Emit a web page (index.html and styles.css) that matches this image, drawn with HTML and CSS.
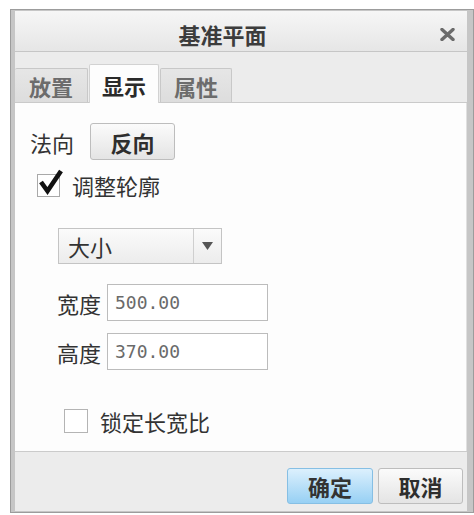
FILE: index.html
```html
<!DOCTYPE html>
<html lang="zh-CN">
<head>
  <meta charset="UTF-8">
  <title>基准平面</title>
  <link rel="stylesheet" href="styles.css">
</head>
<body>
  <div class="dialog">
    <div class="panel">
      <div class="titlebar">
        <span class="title">基准平面</span>
        <span class="close">
          <svg width="15" height="13" viewBox="0 0 15 13"><path d="M2 1.5 L13 11.5 M13 1.5 L2 11.5" stroke="#6b6b6b" stroke-width="3.4" stroke-linecap="round"/></svg>
        </span>
      </div>

      <div class="tabs">
        <div class="tab">放置</div>
        <div class="tab active">显示</div>
        <div class="tab">属性</div>
      </div>

      <div class="content">
        <div class="dir-row">
          <span class="label">法向</span>
          <button class="btn btn-flip">反向</button>
        </div>

        <label class="check check-outline">
          <span class="box">
            <svg class="tick" width="26" height="28" viewBox="0 0 26 28"><path d="M3 14 L9.5 23 L23 3" fill="none" stroke="#111" stroke-width="4.6" stroke-linejoin="miter"/></svg>
          </span>
          <span class="label">调整轮廓</span>
        </label>

        <div class="select">
          <span class="select-text">大小</span>
          <span class="select-arrow">
            <svg width="11" height="8" viewBox="0 0 11 8"><polygon points="0,0 11,0 5.5,8" fill="#555"/></svg>
          </span>
        </div>

        <div class="field">
          <span class="label">宽度</span>
          <input class="num" type="text" value="500.00">
        </div>
        <div class="field field-second">
          <span class="label">高度</span>
          <input class="num" type="text" value="370.00">
        </div>

        <label class="check check-lock">
          <span class="box"></span>
          <span class="label">锁定长宽比</span>
        </label>
      </div>

      <div class="footer">
        <button class="btn btn-ok">确定</button>
        <button class="btn btn-cancel">取消</button>
      </div>
    </div>
  </div>
</body>
</html>
```

FILE: styles.css
```css
* {
  box-sizing: border-box;
}
body {
  margin: 0;
  background: #ffffff;
  font-family: "Noto Sans CJK SC", "Noto Sans", sans-serif;
  color: #333;
}
.dialog {
  width: 464px;
  margin: 9px 0 0 10px;
  border: 1px solid #9c9c9c;
  padding: 1px 6px 1px 4px;
  background: #c6c6c6;
}
.panel {
  display: flex;
  flex-direction: column;
  background: #ececec;
}
.titlebar {
  display: flex;
  height: 41px;
  padding-top: 12px;
  border-bottom: 1px solid #c6c6c6;
  background: linear-gradient(#f6f6f6, #e6e6e6);
}
.title {
  flex: 1;
  text-align: center;
  font-size: 22px;
  line-height: 22px;
  font-weight: bold;
  color: #3c3c3c;
}
.close {
  width: 37px;
  padding: 5px 0 0 10px;
}
.close svg {
  display: block;
}
.tabs {
  display: flex;
  align-items: flex-end;
  height: 51px;
  border-bottom: 1px solid #cacaca;
  background: #ececec;
}
.tab {
  height: 34px;
  padding-top: 6px;
  border: 1px solid #c8c8c8;
  border-bottom: none;
  border-radius: 2px 2px 0 0;
  background: linear-gradient(#e6e6e6, #dddddd);
  text-align: center;
  font-size: 22px;
  line-height: 22px;
  font-weight: bold;
  color: #6c6c6c;
}
.tab:nth-child(1) {
  width: 73px;
  border-left: none;
}
.tab:nth-child(3) {
  width: 72px;
}
.tab.active {
  width: 70px;
  height: 39px;
  margin: 0 1px -1px;
  padding-top: 9px;
  border-color: #d2d2d2;
  background: #fdfdfd;
  color: #2a2a2a;
}
.content {
  height: 348px;
  padding: 20px 0 0 15px;
  background: #fdfdfd;
  border-right: 1px solid #e0e0e0;
}
.label {
  font-size: 22px;
  line-height: 22px;
  color: #333;
}
.dir-row {
  display: flex;
  align-items: center;
  gap: 16px;
}
.btn {
  height: 37px;
  padding: 0;
  border: 1px solid #bdbdbd;
  border-radius: 3px;
  background: linear-gradient(#fbfbfb, #e4e4e4);
  font-family: "Noto Sans CJK SC", "Noto Sans", sans-serif;
  font-size: 22px;
  font-weight: bold;
  color: #2e2e2e;
}
.btn-flip {
  width: 85px;
}
.check {
  display: flex;
  align-items: center;
  height: 24px;
}
.box {
  position: relative;
  width: 23px;
  height: 23px;
  border: 1px solid #a9a9a9;
  background: #ffffff;
}
.tick {
  position: absolute;
  left: 0;
  top: -7px;
}
.check-outline {
  margin: 13px 0 0 7px;
  gap: 12px;
}
.check-lock {
  margin: 39px 0 0 34px;
  gap: 12px;
}
.check-lock .box {
  width: 24px;
  height: 24px;
  border-color: #b4b4b4;
}
.select {
  display: flex;
  width: 164px;
  height: 36px;
  margin: 31px 0 0 28px;
  border: 1px solid #c4c4c4;
  background: linear-gradient(#fbfbfb, #ececec);
}
.select-text {
  flex: 1;
  padding: 6px 0 0 9px;
  font-size: 22px;
  line-height: 22px;
  color: #333;
}
.select-arrow {
  width: 28px;
  border-left: 1px solid #cfcfcf;
  padding: 13px 0 0 8px;
}
.select-arrow svg {
  display: block;
}
.field {
  display: flex;
  align-items: center;
  gap: 6px;
  margin: 20px 0 0 27px;
}
.field-second {
  margin-top: 12px;
}
.num {
  width: 161px;
  height: 37px;
  padding: 0 0 0 7px;
  border: 1px solid #bcbcbc;
  background: #ffffff;
  font-family: "DejaVu Sans Mono", "Liberation Mono", monospace;
  font-size: 18px;
  color: #6a6a6a;
}
.footer {
  display: flex;
  justify-content: flex-end;
  gap: 5px;
  height: 60px;
  padding: 16px 4px 0 0;
  border-top: 1px solid #cbcbcb;
  background: #ececec;
}
.btn-ok {
  width: 86px;
  height: 36px;
  border-color: #86bfe4;
  background: linear-gradient(#dcf0fd, #97d0f4);
  color: #333;
}
.btn-cancel {
  width: 85px;
  height: 36px;
}
```
